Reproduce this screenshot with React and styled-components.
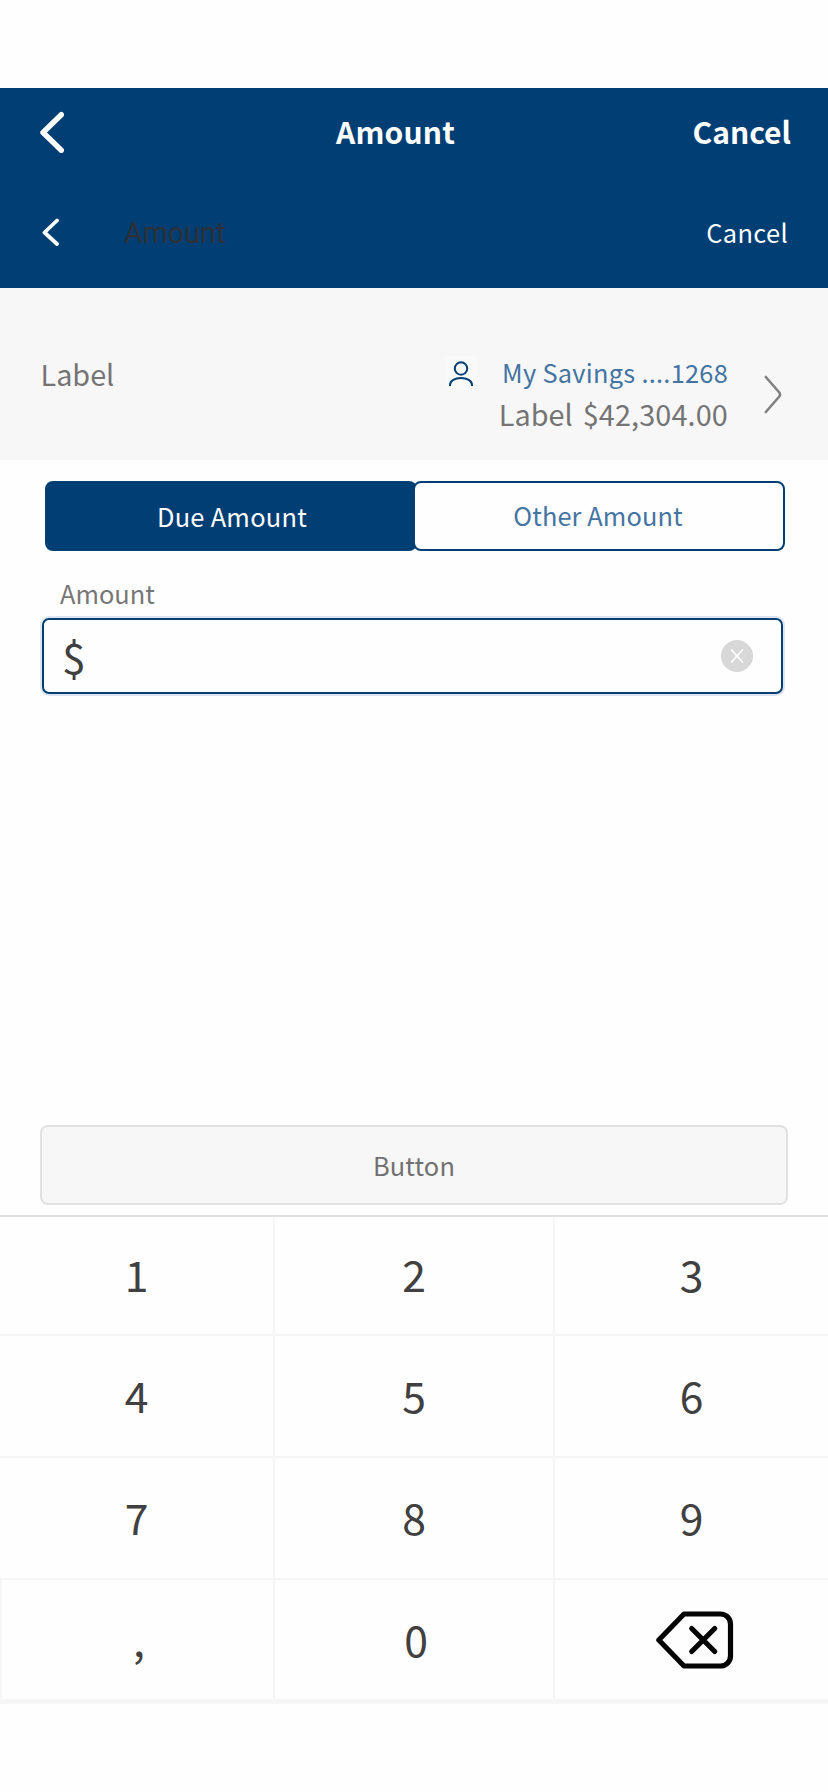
import React from "react";
import styled, { createGlobalStyle } from "styled-components";

const navy = "#003e74";
const line = "#f6f6f6";

const GlobalStyle = createGlobalStyle`
  * { box-sizing: border-box; }
  body { margin: 0; background: #fff; }
  button { margin: 0; padding: 0; border: 0; background: none; font: inherit; color: inherit; letter-spacing: inherit; }
`;

const Page = styled.main`
  display: flex;
  flex-direction: column;
  width: 828px;
  height: 1792px;
  padding-top: 88px;
  overflow: hidden;
  background: #fefefe;
  font-family: "Noto Sans CJK SC", "Noto Sans", sans-serif;
  font-size: 25.4px;
  line-height: 40px;
`;

const Header = styled.header`
  height: 200px;
  background: ${navy};
  color: #fff;
`;

const TitleBar = styled.div`
  display: grid;
  grid-template-columns: 296px 1fr auto;
  align-items: center;
  height: 88px;
  padding: 0 37px 0 40px;
  font-size: 30px;
  font-weight: 700;
`;

const TitleText = styled.span`
  padding-bottom: 2px;
  letter-spacing: ${(p) => p.$spacing || 0}px;
`;

const SubBar = styled.div`
  display: flex;
  align-items: center;
  height: 112px;
  padding: 0 40px 0 42px;
`;

const SubTitle = styled.span`
  flex: 1;
  padding: 2px 0 0 65px;
  color: #2d3136;
  font-family: Roboto, sans-serif;
  font-size: 28.7px;
`;

const SubAction = styled.button`
  letter-spacing: 0.35px;
`;

const BackIcon = styled.svg`
  display: block;
`;

const Account = styled.section`
  display: flex;
  height: 172px;
  padding: 62px 45px 0 40px;
  background: #f7f7f7;
  color: #747474;
  font-size: 28.8px;
`;

const AccountLabel = styled.span`
  flex: 1;
  padding: 4px 0 0 0.5px;
`;

const AccountInfo = styled.div`
  display: flex;
  flex-direction: column;
  align-items: flex-end;
  margin-right: 35px;
`;

const AccountName = styled.div`
  display: flex;
  height: 44px;
  gap: 25px;
  padding-top: 2px;
  color: #4474a2;
  font-size: 25.4px;
  letter-spacing: 0.25px;
`;

const PersonBox = styled.span`
  display: flex;
  width: 32px;
  height: 34px;
  margin-top: 4px;
  background: #f9f9f9;
`;

const Balance = styled.div`
  display: flex;
  gap: 10px;
`;

const BalanceValue = styled.span`
  letter-spacing: 0.15px;
`;

const Chevron = styled.svg`
  margin-top: 24px;
`;

const Segments = styled.div`
  display: flex;
  height: 70px;
  margin: 21px 43px 0 45px;
`;

const Segment = styled.button`
  flex: 1;
  height: 70px;
  margin-left: ${(p) => (p.$active ? 0 : -4)}px;
  padding: ${(p) => (p.$active ? "0 0 0 2px" : "0 2px 2px 0")};
  border: 2px solid ${navy};
  border-radius: 8px;
  background: ${(p) => (p.$active ? navy : "#fefefe")};
  color: ${(p) => (p.$active ? "#fff" : "#4474a2")};
  letter-spacing: ${(p) => (p.$active ? 0.27 : 0.1)}px;
`;

const FieldLabel = styled.label`
  margin: 22px 0 0 60px;
  color: #777;
`;

const Field = styled.div`
  display: flex;
  align-items: center;
  justify-content: space-between;
  height: 76px;
  margin: 5px 45px 0 42px;
  padding: 0 28px 0 18px;
  border: 2px solid ${navy};
  border-radius: 7px;
  box-shadow: 0 0 0 2px #dde6f0;
  color: #404040;
  font-size: 42.7px;
`;

const Currency = styled.span`
  padding-bottom: 2px;
`;

const Submit = styled.button`
  height: 80px;
  margin: 431px 40px 10px;
  border: 2px solid #e1e1e1;
  border-radius: 8px;
  background: #f7f7f7;
  color: #707070;
  letter-spacing: 0.15px;
`;

const Keypad = styled.div`
  display: grid;
  grid-template-columns: 275px 280px 273px;
  grid-template-rows: 119px 122px 122px 124px;
  border-top: 2px solid #e1e1e1;
  color: #404040;
  font-size: 42.7px;
`;

const Key = styled.button`
  display: flex;
  align-items: center;
  justify-content: center;
  padding: 0 0 ${(p) => p.$bottom ?? 4}px ${(p) => p.$left || 0}px;
  border-style: solid;
  border-color: ${line};
  border-width: 0 ${(p) => (p.$last ? 0 : 2)}px ${(p) => (p.$foot ? 5 : 2)}px ${(p) => (p.$edge ? 2 : 0)}px;
`;

function BackspaceIcon() {
  return (
    <svg width="78" height="58" viewBox="0 0 78 58" fill="none" stroke="#050505" strokeWidth="5.2" strokeLinecap="round" strokeLinejoin="round">
      <path d="M28 3h36.500a10 10 0 0 1 10 10v32a10 10 0 0 1-10 10H28L2.800 29Z" />
      <path d="m35.700 17.500 23 23m0-23-23 23" />
    </svg>
  );
}

const keys = [
  { label: "1", bottom: 6 },
  { label: "2", bottom: 6 },
  { label: "3", last: true, bottom: 6 },
  { label: "4" },
  { label: "5" },
  { label: "6", last: true },
  { label: "7" },
  { label: "8" },
  { label: "9", last: true },
  { label: ",", edge: true, foot: true, left: 3 },
  { label: "0", foot: true, left: 4 },
  { label: <BackspaceIcon />, foot: true, last: true, bottom: 0, left: 6 },
];

export default function App() {
  return (
    <>
      <GlobalStyle />
      <Page>
        <Header>
          <TitleBar>
            <BackIcon width="24" height="42" viewBox="0 0 24 42" fill="none" stroke="#fff" strokeWidth="5.4" strokeLinecap="round" strokeLinejoin="round">
              <path d="M21.300 3.700 3 21.500l18.300 17.800" />
            </BackIcon>
            <TitleText $spacing={0.2}>Amount</TitleText>
            <TitleText>Cancel</TitleText>
          </TitleBar>
          <SubBar>
            <BackIcon width="17" height="28" viewBox="0 0 17 28" fill="none" stroke="#fff" strokeWidth="3.800" strokeLinecap="round" strokeLinejoin="round">
              <path d="M15 2.500 2.500 14.500 15 26" />
            </BackIcon>
            <SubTitle>Amount</SubTitle>
            <SubAction>Cancel</SubAction>
          </SubBar>
        </Header>
        <Account>
          <AccountLabel>Label</AccountLabel>
          <AccountInfo>
            <AccountName>
              <PersonBox>
                <svg width="32" height="34" viewBox="0 0 32 34" fill="none" stroke={navy} strokeWidth="2">
                  <circle cx="16" cy="12.500" r="6.200" />
                  <path d="M5 30v-1c0-4.500 5-7 11-7s11 2.500 11 7v1" />
                </svg>
              </PersonBox>
              <span>My Savings ....1268</span>
            </AccountName>
            <Balance>
              <span>Label</span>
              <BalanceValue>$42,304.00</BalanceValue>
            </Balance>
          </AccountInfo>
          <Chevron width="20" height="40" viewBox="0 0 20 40" fill="none" stroke="#808080" strokeWidth="2.600" strokeLinecap="round" strokeLinejoin="round">
            <path d="m2.800 3 13.500 15.500q1.500 2 0 4L2.800 38" />
          </Chevron>
        </Account>
        <Segments>
          <Segment $active>Due Amount</Segment>
          <Segment>Other Amount</Segment>
        </Segments>
        <FieldLabel>Amount</FieldLabel>
        <Field>
          <Currency>$</Currency>
          <svg width="32" height="32" viewBox="0 0 32 32">
            <circle cx="16" cy="16" r="16" fill="#d8d8d8" />
            <path d="m10.500 10 11 12m0-12-11 12" stroke="#fff" strokeWidth="1.800" strokeLinecap="round" />
          </svg>
        </Field>
        <Submit>Button</Submit>
        <Keypad>
          {keys.map((k, i) => (
            <Key key={i} $last={k.last} $foot={k.foot} $edge={k.edge} $left={k.left} $bottom={k.bottom}>
              {k.label}
            </Key>
          ))}
        </Keypad>
      </Page>
    </>
  );
}
